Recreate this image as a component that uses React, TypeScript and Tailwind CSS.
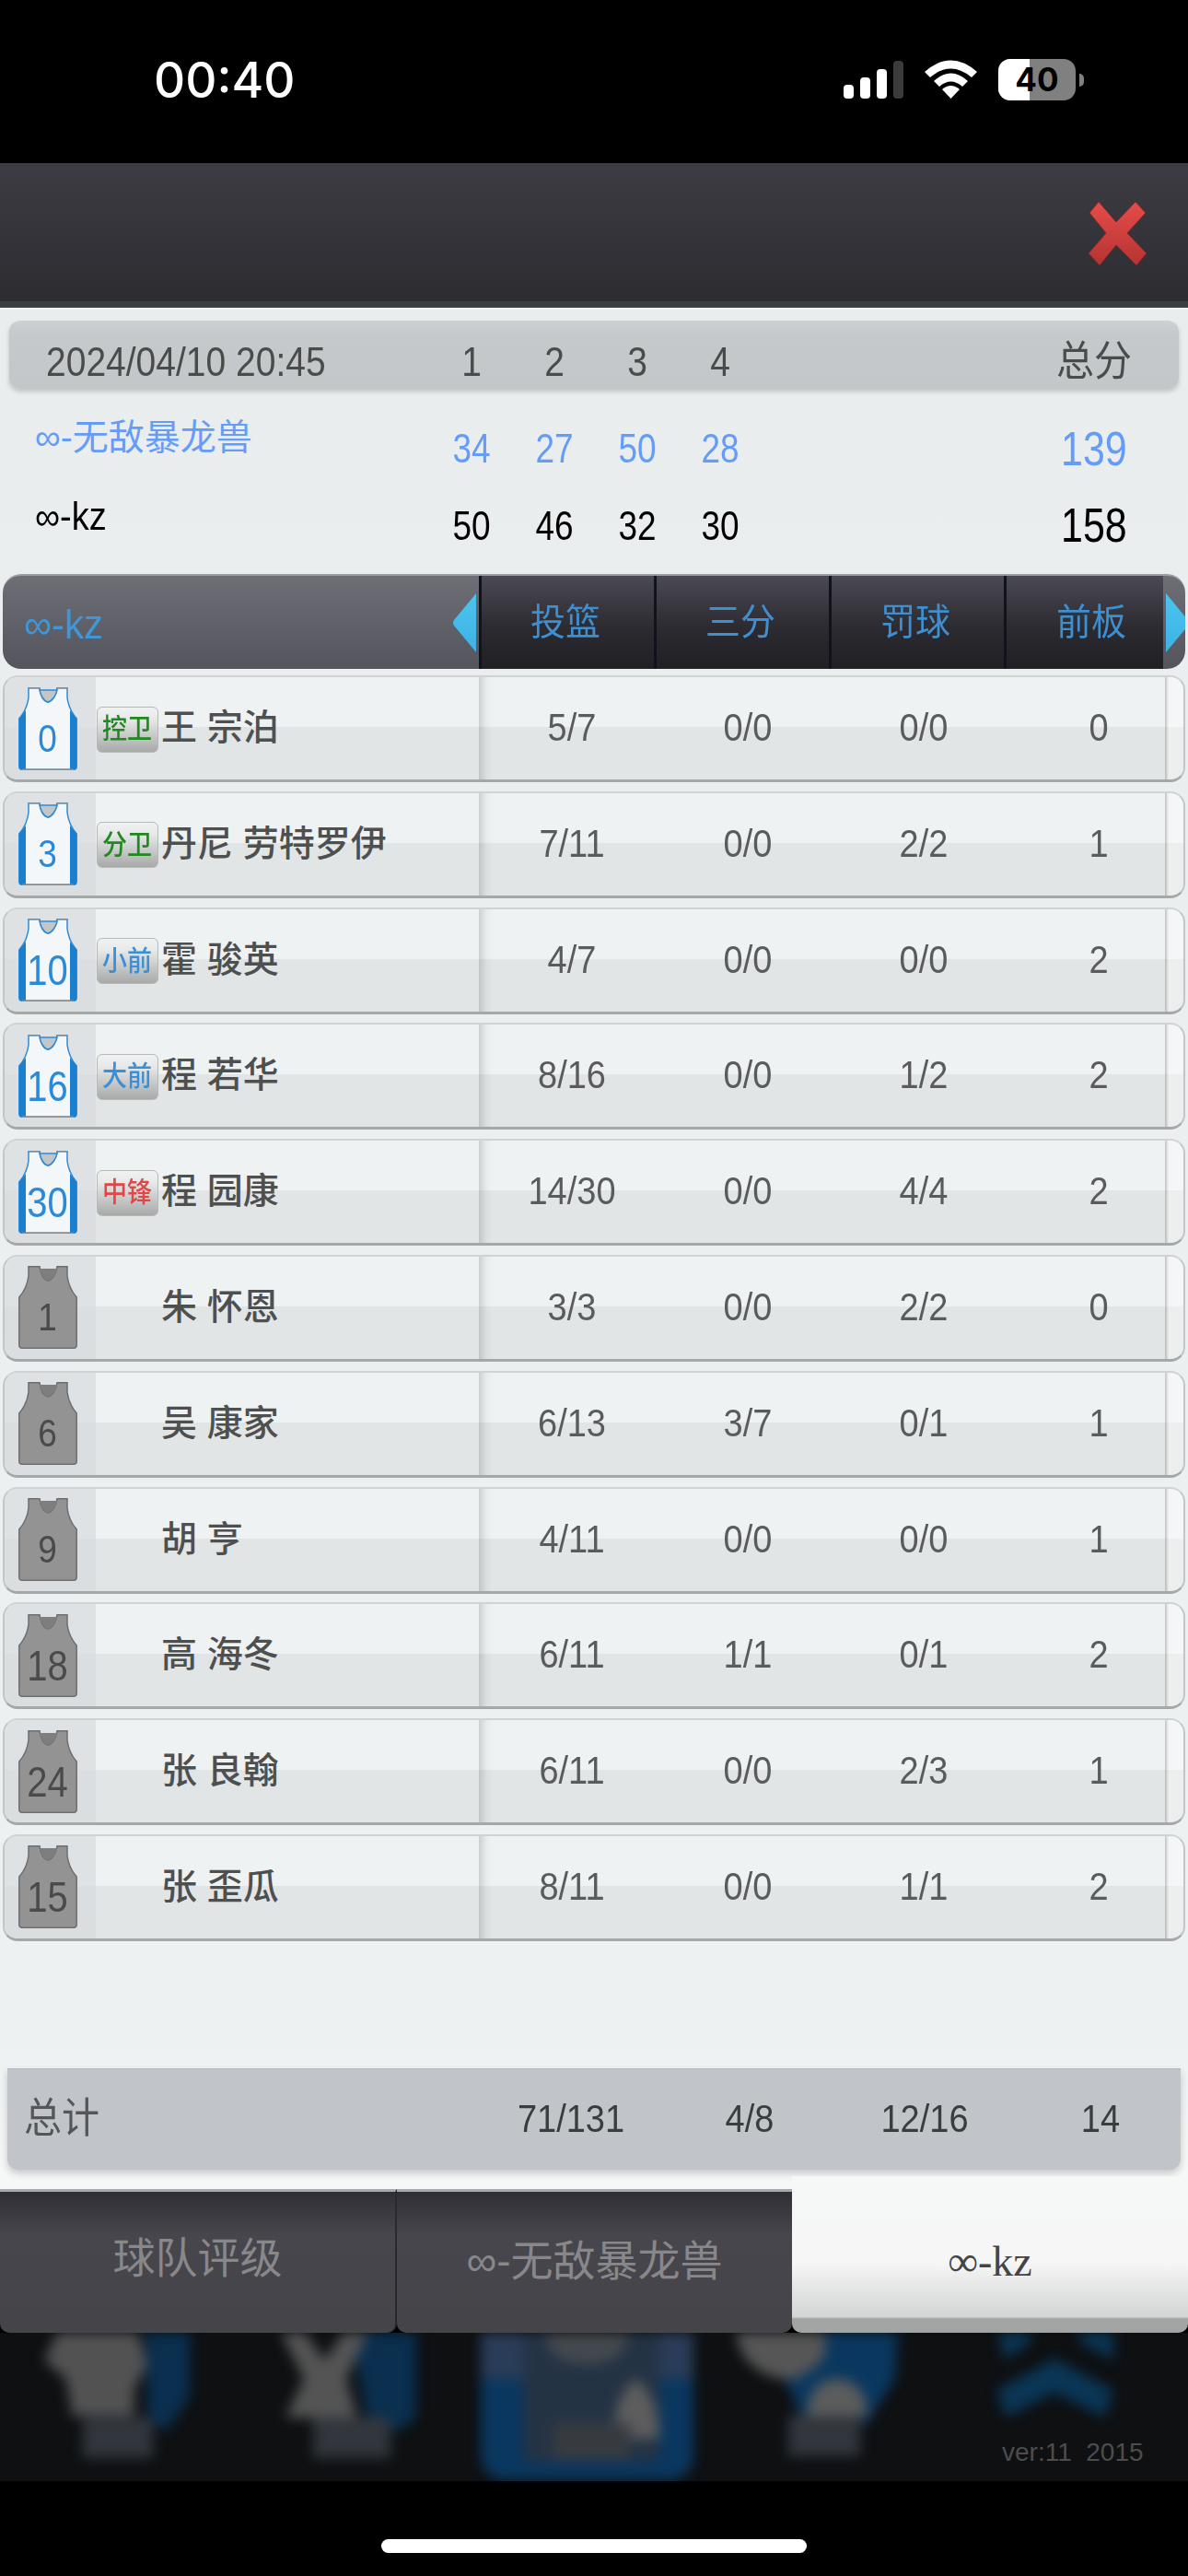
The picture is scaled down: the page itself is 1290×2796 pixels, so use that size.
const CJK = "font-['Liberation_Sans','Noto_Sans_CJK_SC',sans-serif]";

type Player = {
  num: string;
  pos?: string;
  posColor?: string;
  name: string;
  fg: string;
  three: string;
  ft: string;
  orb: string;
};

const players: Player[] = [
  { num: "0", pos: "控卫", posColor: "text-[#1f8a1f]", name: "王 宗泊", fg: "5/7", three: "0/0", ft: "0/0", orb: "0" },
  { num: "3", pos: "分卫", posColor: "text-[#1f8a1f]", name: "丹尼 劳特罗伊", fg: "7/11", three: "0/0", ft: "2/2", orb: "1" },
  { num: "10", pos: "小前", posColor: "text-[#3b8fd8]", name: "霍 骏英", fg: "4/7", three: "0/0", ft: "0/0", orb: "2" },
  { num: "16", pos: "大前", posColor: "text-[#3b8fd8]", name: "程 若华", fg: "8/16", three: "0/0", ft: "1/2", orb: "2" },
  { num: "30", pos: "中锋", posColor: "text-[#e04848]", name: "程 园康", fg: "14/30", three: "0/0", ft: "4/4", orb: "2" },
  { num: "1", name: "朱 怀恩", fg: "3/3", three: "0/0", ft: "2/2", orb: "0" },
  { num: "6", name: "吴 康家", fg: "6/13", three: "3/7", ft: "0/1", orb: "1" },
  { num: "9", name: "胡 亨", fg: "4/11", three: "0/0", ft: "0/0", orb: "1" },
  { num: "18", name: "高 海冬", fg: "6/11", three: "1/1", ft: "0/1", orb: "2" },
  { num: "24", name: "张 良翰", fg: "6/11", three: "0/0", ft: "2/3", orb: "1" },
  { num: "15", name: "张 歪瓜", fg: "8/11", three: "0/0", ft: "1/1", orb: "2" },
];

const JERSEY = "M11 0.8 L23 0.8 C24 8 27 15 32 16 C37 15 41 8 42 0.8 L53 0.8 L53 11 C54 19 58 28 63.2 34 L63.2 86 Q63.2 89.2 60 89.2 L4 89.2 Q0.8 89.2 0.8 86 L0.8 34 C6 28 10 19 11 11 Z";
const NECK = "M23 3 L42 3 C41 8 37 15 32 16 C27 15 24 8 23 3 Z";

const Jersey = ({ num, active }: { num: string; active: boolean }) => (
  <div className="relative w-[64px] h-[90px]">
    <svg width="64" height="90" viewBox="0 0 64 90" className="absolute inset-0">
      {active ? (
        <>
          <path d={JERSEY} fill="#f3f7f9" stroke="#2f8ad6" strokeWidth="1.5" />
          <path d="M0.8 34 L8 25 L8 89.2 L4 89.2 Q0.8 89.2 0.8 86 Z" fill="#1b7fd0" />
          <path d="M63.2 34 L56 25 L56 89.2 L60 89.2 Q63.2 89.2 63.2 86 Z" fill="#1b7fd0" />
          <path d={NECK} fill="#c3c6c8" stroke="#2f8ad6" strokeWidth="1.5" />
          <path d="M11 0.8 L23 0.8 M42 0.8 L53 0.8 M4 89.2 L60 89.2" stroke="#8a8d90" strokeWidth="1.5" />
        </>
      ) : (
        <>
          <path d={JERSEY} fill="#939393" stroke="#6e6e6e" strokeWidth="1.5" />
          <path d={NECK} fill="#7e7e7e" />
        </>
      )}
    </svg>
    <span
      className={`absolute inset-x-0 top-[31px] text-center leading-[50px] scale-y-[1.15] ${
        num.length > 1 ? "text-[40px]" : "text-[37px]"
      } ${active ? "text-[#2a8ad8]" : "text-[#4a4a4a]"}`}
    >
      {num}
    </span>
  </div>
);

const Stat = ({ w, v }: { w: string; v: string }) => (
  <span className={`${w} shrink-0 text-center text-[38px] scale-y-110`}>{v}</span>
);

const Row = ({ p }: { p: Player }) => (
  <div className="relative flex h-[116px] mx-[3px] rounded-[16px] overflow-hidden border-b-[3px] border-x-2 border-t-2 border-x-[#c2c6c7] border-t-[#cfd3d4] border-b-[#a4a8a9] bg-[linear-gradient(#eff2f3_0%,#eff2f3_49%,#e2e5e6_49%,#e2e5e6_100%)]">
    <div className="w-[99px] shrink-0 flex items-center justify-center pr-[6px] bg-[#d9dcde]/70">
      <Jersey num={p.num} active={!!p.pos} />
    </div>
    <div className="w-[416px] shrink-0 flex items-center gap-[3px] -mt-[2px]">
      <div className="w-[68px] shrink-0 flex justify-center">
        {p.pos && (
          <span className={`w-[67px] h-[50px] mt-[4px] rounded-[6px] border border-[#b6b9ba] bg-[linear-gradient(#f0f1f1,#e8e9e9_25%,#a8a9a9)] flex items-center justify-center text-[27px] leading-none font-medium ${p.posColor}`}>
            <span className="scale-y-110">{p.pos}</span>
          </span>
        )}
      </div>
      <span className="text-[39px] leading-none font-medium text-[#4e5050] whitespace-pre">{p.name}</span>
    </div>
    <div className="flex-1 flex items-center pl-[6px] text-[#5a5c5c] bg-[linear-gradient(90deg,rgba(0,0,0,0.14),rgba(0,0,0,0.03)_8px,transparent_14px)]">
      <Stat w="w-[190px]" v={p.fg} />
      <Stat w="w-[192px]" v={p.three} />
      <Stat w="w-[190px]" v={p.ft} />
      <Stat w="w-[190px]" v={p.orb} />
    </div>
    <div className="absolute right-0 inset-y-0 w-[20px] bg-[linear-gradient(90deg,rgba(0,0,0,0.2),rgba(255,255,255,0.35)_4px)]" />
  </div>
);

const Arrow = ({ right }: { right?: boolean }) => (
  <svg width="26" height="64" viewBox="0 0 26 64" className="block">
    <defs>
      <linearGradient id={right ? "ar" : "al"} x1="0" y1="0" x2="0" y2="1">
        <stop offset="0" stopColor="#4cc4ee" />
        <stop offset="1" stopColor="#3cb2e6" />
      </linearGradient>
    </defs>
    <path d={right ? "M0 0 L24 29 Q26 32 24 35 L0 64 Z" : "M26 0 L2 29 Q0 32 2 35 L26 64 Z"} fill={`url(#${right ? "ar" : "al"})`} />
  </svg>
);

const quarters = [
  { label: "1", a: "34", b: "50" },
  { label: "2", a: "27", b: "46" },
  { label: "3", a: "50", b: "32" },
  { label: "4", a: "28", b: "30" },
];

export default function App() {
  return (
    <div className={`w-[1290px] h-[2796px] bg-black overflow-hidden flex flex-col ${CJK}`}>
      {/* status bar */}
      <div className="h-[177px] shrink-0 flex justify-between pl-[167px] pr-[113px] pt-[56px]">
        <span className="text-[53px] leading-[62px] font-medium text-white font-['Inter',sans-serif]">00:40</span>
        <div className="flex items-start pt-[10px]">
          <svg width="65" height="41" viewBox="0 0 65 41" className="mr-[23px]">
            <rect x="0" y="26" width="11" height="15" rx="4" fill="#fff" />
            <rect x="18" y="18" width="11" height="23" rx="4" fill="#fff" />
            <rect x="36" y="9" width="11" height="32" rx="4" fill="#fff" />
            <rect x="54" y="0" width="11" height="41" rx="4" fill="#3b3b3b" />
          </svg>
          <svg width="57" height="42" viewBox="0 0 57 42" className="mr-[23px] -mt-[1px]">
            <path d="M28.5 42 L19 32 Q28.5 24 38 32 Z" fill="#fff" />
            <path d="M10 23 Q28.5 6 47 23 L41 29 Q28.5 18 16 29 Z" fill="#fff" />
            <path d="M0 13 Q28.5 -12 57 13 L51 19 Q28.5 0 6 19 Z" fill="#fff" />
          </svg>
          <div className="flex items-center -mt-[2px]">
            <div className="relative w-[84px] h-[45px] rounded-[13px] bg-[#808080] overflow-hidden flex items-center justify-center">
              <div className="absolute left-0 inset-y-0 w-[34px] bg-white" />
              <span className="relative text-[35px] leading-none font-bold text-black font-['Inter',sans-serif]">40</span>
            </div>
            <div className="w-[5px] h-[14px] ml-[4px] rounded-r-full bg-[#808080]" />
          </div>
        </div>
      </div>

      {/* top bar */}
      <div className="h-[157px] shrink-0 flex items-center justify-end pr-[44px] border-b-[7px] border-b-[#3c3f43] bg-[linear-gradient(#3d3c44,#2d2c31)]">
        <svg width="64" height="71" viewBox="0 0 64 71" className="mt-[2px]">
          <defs>
            <linearGradient id="closeRed" x1="0" y1="0" x2="0" y2="1">
              <stop offset="0" stopColor="#e54d4a" />
              <stop offset="1" stopColor="#b53331" />
            </linearGradient>
          </defs>
          <path
            d="M1 13 L11 1 L30 23 L51 1 L62 13 L42 35 L63 57 L52 70 L30 48 L12 70 L0 57 L19 35 Z"
            fill="url(#closeRed)"
            stroke="#7a2a2a"
            strokeWidth="1"
            strokeLinejoin="round"
          />
        </svg>
      </div>

      {/* score panel */}
      <div className="h-[2044px] shrink-0 flex flex-col border-t-2 border-t-[#f4f6f6] bg-[linear-gradient(#e9edee,#eef1f2_92%,#f6f8f7_99%)]">
        <div className="mx-[10px] mt-[12px] h-[74px] shrink-0 relative flex items-center pt-[17px] rounded-[12px] bg-[linear-gradient(#cdd1d2,#c5c9cb_20%,#c3c7c9)] shadow-[0_3px_5px_rgba(0,0,0,0.18)] text-[#4a4c4c]">
          <span className="absolute left-[40px] text-[39px] scale-y-115">2024/04/10 20:45</span>
          <div className="ml-[457px] flex">
            {quarters.map((q) => (
              <span key={q.label} className="w-[90px] text-center text-[39px] scale-y-115">{q.label}</span>
            ))}
          </div>
          <span className="absolute left-[1137px] text-[41px] scale-y-110">总分</span>
        </div>

        <div className="h-[90px] mt-[14px] shrink-0 relative flex items-center text-[#649cf8]">
          <span className="absolute left-[38px] top-[15px] text-[39px] leading-[48px] whitespace-pre">∞-无敌暴龙兽</span>
          <div className="ml-[467px] mt-[14px] flex">
            {quarters.map((q) => (
              <span key={q.label} className="w-[90px] text-center text-[37px] scale-y-120">{q.a}</span>
            ))}
          </div>
          <span className="absolute left-[1152px] top-[26px] text-[43px] leading-[50px] scale-y-120">139</span>
        </div>
        <div className="h-[86px] shrink-0 relative flex items-center text-black">
          <span className="absolute left-[38px] top-[11px] text-[38px] leading-[48px] whitespace-pre scale-y-110">∞-kz</span>
          <div className="ml-[467px] mt-[6px] flex">
            {quarters.map((q) => (
              <span key={q.label} className="w-[90px] text-center text-[37px] scale-y-120">{q.b}</span>
            ))}
          </div>
          <span className="absolute left-[1152px] top-[19px] text-[43px] leading-[50px] scale-y-120">158</span>
        </div>

        {/* table header */}
        <div className="mt-[11px] mx-[3px] h-[103px] shrink-0 relative flex rounded-[20px] overflow-hidden border-t-2 border-t-[#9a9ea2] bg-[linear-gradient(#6e6e77,#53545c)]">
          <div className="w-[517px] shrink-0 flex items-center pl-[23px] text-[42px] text-[#3f97d8] scale-y-105">
            <span className="mt-[4px] whitespace-pre">∞-kz</span>
          </div>
          <div className="w-[743px] shrink-0 flex bg-[linear-gradient(#4b4a54,#2c2b31_55%,#201f24)] text-[38px] text-[#3f8fd0]">
            {["投篮", "三分", "罚球"].map((h) => (
              <div key={h} className="w-[190px] flex items-center justify-center pr-[5px] border-l-[3px] border-l-[#10131c]">
                <span className="scale-y-105">{h}</span>
              </div>
            ))}
            <div className="w-[173px] flex items-center justify-center pl-[14px] border-l-[3px] border-l-[#10131c]">
              <span className="scale-y-105">前板</span>
            </div>
          </div>
          <div className="absolute left-[488px] top-[19px]"><Arrow /></div>
          <div className="absolute left-[1263px] top-[19px]"><Arrow right /></div>
        </div>

        {/* player rows */}
        <div className="mt-[7px] flex flex-col gap-[9.8px]">
          {players.map((p) => (
            <Row key={p.num} p={p} />
          ))}
        </div>

        {/* totals */}
        <div className="mt-[138px] mx-[8px] h-[110px] shrink-0 flex items-center rounded-b-[12px] bg-[#c1c5c9] border-t border-t-[#b3b8bc] shadow-[0_4px_8px_rgba(0,0,0,0.2)] text-[#3a3c3e]">
          <span className="w-[515px] shrink-0 pl-[18px] text-[41px] text-[#54565a] scale-y-110 origin-left">总计</span>
          <Stat w="w-[194px]" v="71/131" />
          <Stat w="w-[194px]" v="4/8" />
          <Stat w="w-[186px]" v="12/16" />
          <span className="w-[11px] shrink-0" />
          <Stat w="w-[174px]" v="14" />
        </div>
      </div>

      {/* tabs */}
      <div className="h-[156px] shrink-0 -mt-[2px] flex relative z-10">
        <div className="w-[431px] rounded-b-[10px] flex items-center justify-center border-t-[3px] border-t-[#a8a9ab] border-r-2 border-r-[#2a2a2e] bg-[linear-gradient(#302f35,#47464d_30%,#454449)] text-[46px] text-[#88888b] pb-[8px]">
          球队评级
        </div>
        <div className="w-[429px] rounded-b-[10px] flex items-center justify-center border-t-[3px] border-t-[#a8a9ab] bg-[linear-gradient(#302f35,#47464d_30%,#454449)] text-[46px] text-[#88888b] pb-[2px] whitespace-pre">
          ∞-无敌暴龙兽
        </div>
        <div className="w-[430px] -mt-[14px] rounded-b-[10px] flex items-center justify-center bg-[linear-gradient(#f6f8f7,#f5f6f5_55%,#d3d5d5_90%,#a3a5a5_91%)] text-[46px] text-[#444] font-['Liberation_Serif',serif] pt-[14px]">
          ∞-kz
        </div>
      </div>

      {/* blurred game menu behind */}
      <div className="relative h-[161px] shrink-0 bg-[#0e1012] overflow-hidden">
        <svg width="1290" height="161" viewBox="0 0 1290 161" className="absolute inset-0 blur-[7px] opacity-90">
          {/* icon 1 */}
          <path d="M158 -10 L206 -10 L206 70 L180 108 L160 90 Z" fill="#0a3356" />
          <path d="M62 0 L95 -10 L150 0 L160 35 L146 60 L146 90 L78 90 L72 50 L48 30 Z" fill="#5a5a5a" />
          <rect x="90" y="92" width="76" height="44" fill="#363b42" />
          {/* icon 2 */}
          <path d="M380 -10 L452 -10 L452 90 Q440 112 400 105 Z" fill="#0a3356" />
          <path d="M300 -10 L325 -10 L352 30 L380 -10 L404 -10 L376 50 L388 92 L310 92 L330 50 Z" fill="#5c5c5c" />
          <rect x="340" y="92" width="84" height="44" fill="#363b42" />
          {/* icon 3 */}
          <rect x="522" y="-30" width="231" height="190" rx="26" fill="#0a3c68" />
          <rect x="522" y="-10" width="231" height="60" fill="#2d4260" />
          <rect x="568" y="-10" width="148" height="150" rx="8" fill="#27374a" />
          <path d="M592 0 L682 0 Q680 34 637 34 Q594 34 592 0 Z" fill="#4a4f55" />
          <path d="M690 50 Q716 70 716 115 L666 115 Q666 70 690 50 Z" fill="#666" />
          <rect x="600" y="98" width="84" height="40" fill="#3c4046" />
          {/* icon 4 */}
          <path d="M826 -10 L975 -10 L972 50 L940 100 L870 90 Z" fill="#0a3c68" />
          <path d="M798 -10 L896 -10 L896 25 Q870 55 848 50 Q800 40 798 -10 Z" fill="#5e5e5e" />
          <path d="M876 90 Q878 52 908 50 Q940 52 942 90 Z" fill="#656565" />
          <rect x="856" y="90" width="78" height="44" fill="#363b42" />
          {/* icon 5 */}
          <path d="M1082 -10 L1120 -10 L1120 10 L1090 30 Z" fill="#0a3a5c" />
          <path d="M1172 -10 L1209 -10 L1209 30 L1172 10 Z" fill="#0a3a5c" />
          <path d="M1145 28 L1209 62 L1200 92 L1145 65 L1092 92 L1082 62 Z" fill="#0a3a5c" />
        </svg>
        <span className="absolute left-[1088px] top-[115px] text-[28px] leading-[30px] text-[#4c4d4e] whitespace-pre">ver:11  2015</span>
      </div>

      {/* home indicator */}
      <div className="flex-1 flex justify-center pt-[63px]">
        <div className="w-[462px] h-[15px] rounded-full bg-white" />
      </div>
    </div>
  );
}
